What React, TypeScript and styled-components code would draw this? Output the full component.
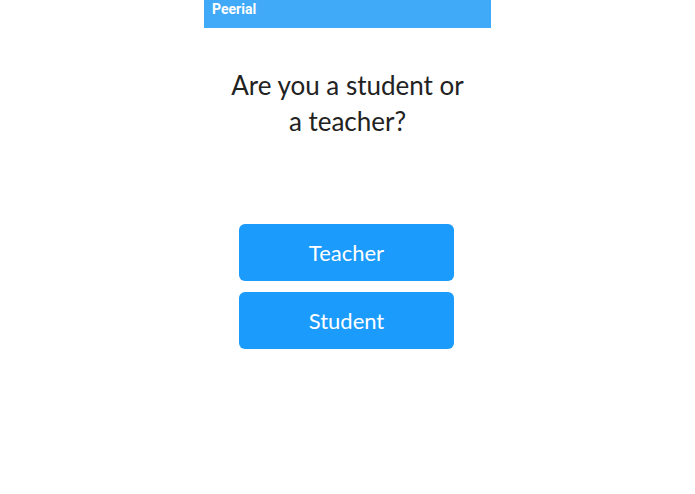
import React from "react";
import styled, { createGlobalStyle } from "styled-components";

const Global = createGlobalStyle`
  html, body { margin: 0; padding: 0; background: #ffffff; }
  body { font-family: "Nunito", Lato, "Noto Sans", sans-serif; }
`;

const Screen = styled.div`
  width: 287px;
  min-height: 494px;
  margin: 0 auto;
  display: flex;
  flex-direction: column;
  align-items: stretch;
  background: #ffffff;
`;

const Header = styled.header`
  height: 28px;
  background: #40aaf9;
  display: flex;
  align-items: flex-start;
  padding: 1px 0 0 8px;
  box-sizing: border-box;
`;

const Brand = styled.span`
  font-family: Roboto, "Liberation Sans", sans-serif;
  font-weight: 700;
  font-size: 14px;
  line-height: 17px;
  color: #ffffff;
`;

const Title = styled.h1`
  margin: 39px 0 0;
  font-family: Lato, "Noto Sans", sans-serif;
  font-weight: 400;
  font-size: 26px;
  line-height: 36px;
  color: #222222;
  text-align: center;
`;

const Choices = styled.div`
  margin-top: 85px;
  display: flex;
  flex-direction: column;
  align-items: center;
  gap: 11px;
  padding-right: 2px;
`;

const Choice = styled.button`
  width: 215px;
  height: 57px;
  border: none;
  border-radius: 6px;
  background: #1b9bfb;
  color: #ffffff;
  font-family: Lato, "Noto Sans", sans-serif;
  font-size: 22px;
  cursor: pointer;
  padding: 0;
`;

export default function App() {
  return (
    <>
      <Global />
      <Screen>
        <Header>
          <Brand>Peerial</Brand>
        </Header>
        <Title>
          Are you a student or
          <br />a teacher?
        </Title>
        <Choices>
          <Choice>Teacher</Choice>
          <Choice>Student</Choice>
        </Choices>
      </Screen>
    </>
  );
}
